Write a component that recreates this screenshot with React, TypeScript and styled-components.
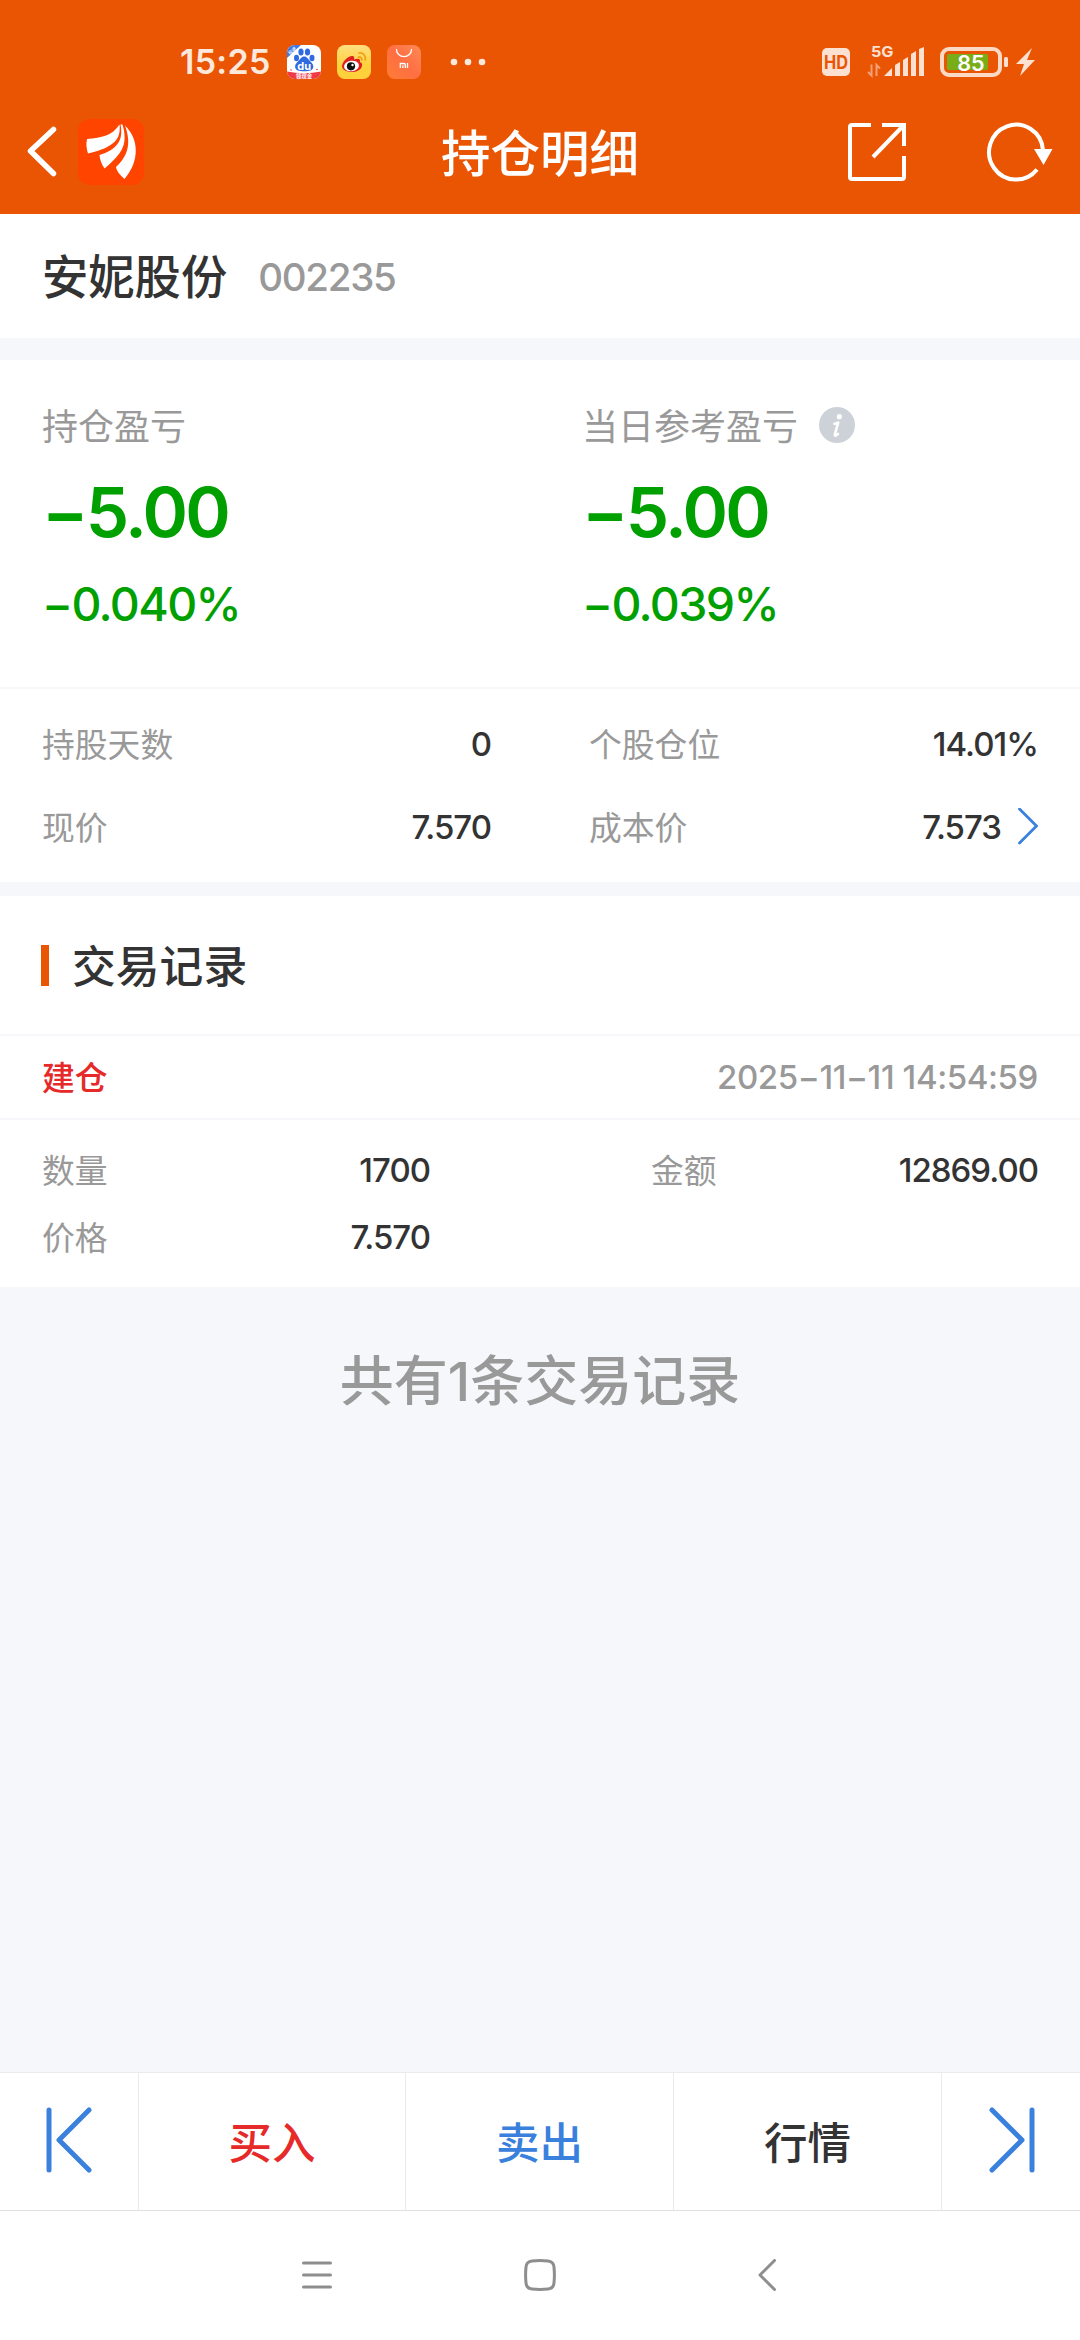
import React from "react";
import styled, { createGlobalStyle } from "styled-components";

const GlobalStyle = createGlobalStyle`
  * { box-sizing: border-box; }
  html, body { margin: 0; padding: 0; background: #f6f7fa; }
  body { font-family: Inter, "Noto Sans CJK SC", sans-serif; font-weight: 500; color: #333; }
`;

const GRAY = "#999";
const GREEN = "#00a000";
const RED = "#e62929";
const BLUE = "#3a80dd";

const Screen = styled.div`
  width: 1080px;
  height: 2340px;
  display: flex;
  flex-direction: column;
  background: #f6f7fa;
  overflow: hidden;
`;

const Header = styled.header`
  height: 214px;
  background: #ea5504;
  color: #fff;
  display: flex;
  flex-direction: column;
  flex: none;
`;

const StatusBar = styled.div`
  height: 90px;
  padding: 34px 43px 0 180px;
  display: flex;
  align-items: center;
  justify-content: space-between;
  svg { display: block; overflow: visible; }
`;

const StatusGroup = styled.div`
  display: flex;
  align-items: center;
`;

const Clock = styled.span`
  width: 107px;
  font-size: 34px;
  font-weight: 600;
  line-height: 36px;
  letter-spacing: 0.3px;
  color: #fde8dc;
`;

const AppIcons = styled.div`
  display: flex;
  gap: 16px;
  margin-right: 29px;
`;

const TitleBar = styled.div`
  height: 124px;
  display: grid;
  grid-template-columns: 1fr auto 1fr;
  align-items: center;
  padding: 0 26px;
`;

const TitleLeft = styled.div`
  display: flex;
  align-items: center;
  gap: 20px;
`;

const TitleRight = styled.div`
  display: flex;
  align-items: center;
  justify-content: flex-end;
  gap: 79px;
`;

const Title = styled.h1`
  margin: 0;
  padding-top: 3px;
  font-size: 49.5px;
  line-height: 60px;
  font-weight: 500;
`;

const StockBar = styled.section`
  height: 124px;
  flex: none;
  padding: 2px 42px 0;
  display: flex;
  align-items: center;
  gap: 31px;
  background: #fff;
`;

const StockName = styled.span`
  font-size: 46.3px;
  line-height: 60px;
`;

const StockCode = styled.span`
  font-size: 38.5px;
  line-height: 60px;
  letter-spacing: -1.3px;
  color: ${GRAY};
`;

const Profit = styled.section`
  margin-top: 22px;
  height: 327px;
  flex: none;
  display: grid;
  grid-template-columns: 540px 540px;
  background: #fff;
`;

const ProfitCell = styled.div`
  padding: 43px 42px 0;
  color: ${GREEN};
`;

const ProfitLabel = styled.div`
  display: flex;
  align-items: center;
  gap: 21px;
  height: 44px;
  font-size: 36px;
  line-height: 44px;
  font-weight: 400;
  color: ${GRAY};
`;

const ProfitCaption = styled.span`
  padding-top: 4px;
`;

const ProfitAmount = styled.div`
  margin-top: 23px;
  font-size: 69px;
  font-weight: 600;
  line-height: 84px;
  letter-spacing: -2.6px;
`;

const ProfitRate = styled.div`
  margin-top: 20px;
  font-size: 46.5px;
  line-height: 60px;
  letter-spacing: -1.6px;
`;

const Stats = styled.section`
  height: 195px;
  flex: none;
  padding: 13px 42px 0;
  border-top: 2px solid #f6f7fa;
  background: #fff;
  display: grid;
  grid-template-columns: 449px 449px;
  grid-template-rows: 83px 83px;
  column-gap: 98px;
`;

const Field = styled.div<{ $h?: number }>`
  display: flex;
  align-items: center;
  justify-content: space-between;
  height: ${(p) => p.$h ?? 83}px;
  font-size: 33px;
`;

const Label = styled.span`
  padding-bottom: 3px;
  font-size: 32.8px;
  font-weight: 400;
  color: ${GRAY};
`;

const Value = styled.span`
  display: flex;
  align-items: center;
  gap: 17px;
  letter-spacing: -1px;
`;

const SectionTitle = styled.h2`
  margin: 14px 0 0;
  height: 138px;
  flex: none;
  padding: 0 41px;
  display: flex;
  align-items: center;
  gap: 23px;
  background: #fff;
  font-size: 43.8px;
  font-weight: 500;

  &::before {
    content: "";
    width: 8px;
    height: 41px;
    background: #ea5504;
  }
`;

const SectionText = styled.span`
  padding-bottom: 3px;
`;

const RecordHead = styled.div`
  height: 84px;
  flex: none;
  padding: 0 42px;
  display: flex;
  align-items: center;
  justify-content: space-between;
  border-top: 2px solid #f6f7fa;
  background: #fff;
  font-size: 33px;
`;

const RecordType = styled.span`
  padding-bottom: 3px;
  font-size: 32.8px;
  color: ${RED};
`;

const RecordTime = styled.time`
  letter-spacing: -0.4px;
  color: ${GRAY};
`;

const RecordBody = styled.div`
  height: 169px;
  flex: none;
  padding: 16px 42px 0;
  border-top: 2px solid #f6f7fa;
  background: #fff;
  display: grid;
  grid-template-columns: 388px 387px;
  grid-template-rows: 67px 67px;
  justify-content: space-between;
`;

const Summary = styled.p`
  margin: 0;
  padding-top: 60px;
  flex: 1;
  text-align: center;
  font-size: 54px;
  line-height: 70px;
  color: ${GRAY};
`;

const ActionBar = styled.nav`
  height: 138px;
  flex: none;
  display: grid;
  grid-template-columns: 139px 267px 268px 268px 138px;
  border-top: 1px solid #ebebeb;
  background: #fff;
`;

const Action = styled.button<{ $color?: string }>`
  border: 0;
  border-right: 1px solid #ebebeb;
  padding: 0 0 3px;
  background: none;
  font: inherit;
  font-size: 43.5px;
  color: ${(p) => p.$color ?? "#333"};
  display: flex;
  align-items: center;
  justify-content: center;

  &:last-child { border-right: 0; padding-left: 2px; }
`;

const SystemNav = styled.div`
  height: 130px;
  flex: none;
  border-top: 1px solid #e0e0e0;
  background: #fff;
  display: grid;
  grid-template-columns: 222px 234px 18px;
  padding: 48px 0 0 302px;
`;

const BaiduIcon = () => (
  <svg width="34" height="34" viewBox="0 0 34 34">
    <defs>
      <clipPath id="bd"><rect width="34" height="34" rx="8" /></clipPath>
    </defs>
    <g clipPath="url(#bd)">
      <rect width="34" height="34" fill="#fff" />
      <path d="M0 0H14L0 13Z" fill="#4079e6" />
      <g fill="#2f6ae0">
        <ellipse cx="14" cy="7" rx="2.6" ry="3.5" />
        <ellipse cx="20.5" cy="7" rx="2.6" ry="3.5" />
        <ellipse cx="9.5" cy="13" rx="2.5" ry="3.2" />
        <ellipse cx="25" cy="13" rx="2.5" ry="3.2" />
        <path d="M17.2 11.5c3 0 3.700 2.500 5.800 4.500 2.500 2.300 3.700 4 3.200 6.500-.6 3-3.500 3.700-9 3.700s-8.400-.7-9-3.700c-.5-2.500.7-4.200 3.200-6.500 2.100-2 2.800-4.500 5.800-4.500z" />
      </g>
      <path d="M0 26.500Q17 30 34 26.500V34H0Z" fill="#ee3b46" />
      <circle cx="4" cy="25" r=".8" fill="#ee3b46" />
      <circle cx="30" cy="24.500" r=".8" fill="#ee3b46" />
    </g>
    <text x="3" y="10" fontSize="4.500" fill="#fff" transform="rotate(-42 3 10)">极速</text>
    <text x="17.2" y="24.500" fontSize="11" fontWeight="700" textAnchor="middle" fill="#fff">du</text>
    <text x="17" y="32.500" fontSize="5.500" fontWeight="700" textAnchor="middle" fill="#fff">领现金</text>
  </svg>
);

const WeiboIcon = () => (
  <svg width="34" height="34" viewBox="0 0 34 34">
    <defs>
      <linearGradient id="wb" x1="0" y1="0" x2="0" y2="1">
        <stop offset="0" stopColor="#ffdf80" />
        <stop offset=".6" stopColor="#ffd23c" />
      </linearGradient>
    </defs>
    <rect width="34" height="34" rx="8" fill="url(#wb)" />
    <path d="M5 21c0-4 6-10 10-10 2.500 0 2.500 2 2 3.500 2-1 5.500-1.500 6 .5.200 1-.3 2-.3 2 2 .6 2.800 2 2.300 4-1 4-5.500 6-10.500 6C9 27 5 24.500 5 21z" fill="#e0211f" />
    <ellipse cx="14.500" cy="21" rx="7.500" ry="5.300" fill="#fff" transform="rotate(-8 14.500 21)" />
    <circle cx="14" cy="21.300" r="4.100" fill="#111" />
    <circle cx="15.500" cy="20" r="1.200" fill="#fff" />
    <g fill="none" stroke="#f0a015" strokeWidth="1.700" strokeLinecap="round">
      <path d="M21.500 12c2-.4 3.600 1 3.300 3.200" />
      <path d="M22 8c4-.6 7 2.500 6.300 6.800" />
    </g>
  </svg>
);

const MiStoreIcon = () => (
  <svg width="34" height="34" viewBox="0 0 34 34">
    <defs>
      <linearGradient id="mi" x1="0" y1="1" x2="1" y2="0">
        <stop offset="0" stopColor="#ff7c35" />
        <stop offset=".5" stopColor="#ff6f43" />
        <stop offset="1" stopColor="#ff8a55" />
      </linearGradient>
    </defs>
    <rect width="34" height="34" rx="8" fill="url(#mi)" />
    <path d="M9.500 4.500a7.500 7.200 0 0 0 15 0" fill="none" stroke="#fff" strokeWidth="1.300" strokeLinecap="round" />
    <path d="M13.300 23v-4.500h3.700q1.300 0 1.300 1.300V23M15.800 20.300V23M20.500 18V23" fill="none" stroke="#fff" strokeWidth="1.300" />
  </svg>
);

const MoreDots = () => (
  <svg width="36" height="8" viewBox="0 0 36 8">
    <g fill="#fde8dc">
      <circle cx="4" cy="4" r="3.300" />
      <circle cx="18" cy="4" r="3.300" />
      <circle cx="32" cy="4" r="3.300" />
    </g>
  </svg>
);

const StatusIcons = () => (
  <svg width="216" height="44" viewBox="820 40 216 44">
    <g fill="#fce0d2">
      <rect x="821" y="48" width="28" height="28" rx="5" />
      <text x="835" y="69" fontSize="18.500" fontWeight="700" textAnchor="middle" fill="#ea5504" textLength="24" lengthAdjust="spacingAndGlyphs">HD</text>
      <text x="870" y="57" fontSize="15" fontWeight="700" textLength="22.500" lengthAdjust="spacingAndGlyphs">5G</text>
      <path d="M883 76l8-8v8z" />
      <path d="M894 76V65l5-3v14z" />
      <path d="M902 76V60l5-3v19z" />
      <path d="M910 76V54l5-3v25z" />
      <path d="M918 76V49l5-2v29z" />
      <rect x="1003" y="57" width="4" height="10" rx="1.500" />
      <path d="M1031 48l-16 16h8l-4 12 15-16h-8z" />
    </g>
    <path d="M867 72l3.500 3.500V64.500M879 68.500l-3.500-3.500V76" fill="none" stroke="#f5a077" strokeWidth="2" />
    <rect x="941" y="49" width="58" height="26" rx="7" fill="none" stroke="#fcd9c5" strokeWidth="4" />
    <rect x="946" y="54" width="41" height="16" rx="2" fill="#78ad18" />
    <text x="970" y="70.500" fontSize="21.500" fontWeight="600" textAnchor="middle" fill="#fff">85</text>
  </svg>
);

const BackIcon = () => (
  <svg width="32" height="54" viewBox="0 0 32 54">
    <path d="M27.500 4.500L4.500 26l23 22.500" fill="none" stroke="#fff" strokeWidth="5.500" strokeLinecap="round" strokeLinejoin="round" />
  </svg>
);

const BrandLogo = () => (
  <svg width="66" height="66" viewBox="0 0 66 66">
    <rect width="66" height="66" rx="12" fill="#ff4400" />
    <g fill="#fff">
      <path d="M41.500 5.500C43 19 38 28 10 34.500Q7.500 27 9 20C24 18.500 34 17 41.500 5.500Z" />
      <path d="M42.500 5.500H44.500C50 25 45 34 26.500 49.500Q22 43 21.500 36C38 31 46 22 42.500 5.500Z" />
      <path d="M47 6.500C61 20 62 42 46.500 60Q38.500 53 38 48C51 36 53 23 47 6.500Z" />
    </g>
  </svg>
);

const ShareIcon = () => (
  <svg width="60" height="60" viewBox="0 0 60 60">
    <g fill="none" stroke="#fff" strokeWidth="4">
      <path d="M24 3H5Q3 3 3 5V55Q3 57 5 57H55Q57 57 57 55V34" />
      <path d="M35 3H57V24M56 4L26 35" />
    </g>
  </svg>
);

const RefreshIcon = () => (
  <svg width="68" height="60" viewBox="0 0 68 60">
    <path d="M51 47.500A27 27.500 0 1 1 57 28" fill="none" stroke="#fff" strokeWidth="4" />
    <path d="M48 27h18.500L57.500 43z" fill="#fff" />
  </svg>
);

const InfoIcon = () => (
  <svg width="36" height="36" viewBox="0 0 36 36">
    <circle cx="18" cy="18" r="18" fill="#cdd1d8" />
    <circle cx="20.300" cy="9.700" r="2.600" fill="#fff" />
    <path d="M15.500 16.800L19.200 15.700 15.800 27.500Q15.600 30 19 27" fill="none" stroke="#fff" strokeWidth="2.600" strokeLinejoin="round" strokeLinecap="round" />
  </svg>
);

const MoreChevron = () => (
  <svg width="20" height="38" viewBox="0 0 20 38">
    <path d="M1.500 1L18.500 18 1.500 35" fill="none" stroke={BLUE} strokeWidth="2.800" strokeLinecap="round" />
  </svg>
);

const SkipIcon = ({ flip }: { flip?: boolean }) => (
  <svg width="46" height="66" viewBox="0 0 46 66">
    <path
      d={flip ? "M43 3V63M3 3L33 33 3 63" : "M3 3V63M43 3L13 33 43 63"}
      fill="none"
      stroke={BLUE}
      strokeWidth="5"
      strokeLinecap="round"
      strokeLinejoin="round"
    />
  </svg>
);

const NavStroke = styled.svg`
  fill: none;
  stroke: #8e8e8e;
  stroke-width: 3;
  stroke-linecap: round;
  stroke-linejoin: round;
`;

export default function App() {
  return (
    <>
      <GlobalStyle />
      <Screen>
        <Header>
          <StatusBar>
            <StatusGroup>
              <Clock>15:25</Clock>
              <AppIcons>
                <BaiduIcon />
                <WeiboIcon />
                <MiStoreIcon />
              </AppIcons>
              <MoreDots />
            </StatusGroup>
            <StatusIcons />
          </StatusBar>
          <TitleBar>
            <TitleLeft>
              <BackIcon />
              <BrandLogo />
            </TitleLeft>
            <Title>持仓明细</Title>
            <TitleRight>
              <ShareIcon />
              <RefreshIcon />
            </TitleRight>
          </TitleBar>
        </Header>

        <StockBar>
          <StockName>安妮股份</StockName>
          <StockCode>002235</StockCode>
        </StockBar>

        <Profit>
          <ProfitCell>
            <ProfitLabel><ProfitCaption>持仓盈亏</ProfitCaption></ProfitLabel>
            <ProfitAmount>−5.00</ProfitAmount>
            <ProfitRate>−0.040%</ProfitRate>
          </ProfitCell>
          <ProfitCell>
            <ProfitLabel><ProfitCaption>当日参考盈亏</ProfitCaption><InfoIcon /></ProfitLabel>
            <ProfitAmount>−5.00</ProfitAmount>
            <ProfitRate>−0.039%</ProfitRate>
          </ProfitCell>
        </Profit>

        <Stats>
          <Field><Label>持股天数</Label><Value>0</Value></Field>
          <Field><Label>个股仓位</Label><Value>14.01%</Value></Field>
          <Field><Label>现价</Label><Value>7.570</Value></Field>
          <Field><Label>成本价</Label><Value>7.573<MoreChevron /></Value></Field>
        </Stats>

        <SectionTitle><SectionText>交易记录</SectionText></SectionTitle>
        <RecordHead>
          <RecordType>建仓</RecordType>
          <RecordTime>2025−11−11 14:54:59</RecordTime>
        </RecordHead>
        <RecordBody>
          <Field $h={67}><Label>数量</Label><Value>1700</Value></Field>
          <Field $h={67}><Label>金额</Label><Value>12869.00</Value></Field>
          <Field $h={67}><Label>价格</Label><Value>7.570</Value></Field>
        </RecordBody>

        <Summary>共有1条交易记录</Summary>

        <ActionBar>
          <Action><SkipIcon /></Action>
          <Action $color={RED}>买入</Action>
          <Action $color={BLUE}>卖出</Action>
          <Action>行情</Action>
          <Action><SkipIcon flip /></Action>
        </ActionBar>

        <SystemNav>
          <NavStroke width="30" height="32" viewBox="0 0 30 32"><path d="M1.500 4H28.500M1.500 16H28.500M1.500 28H28.500" /></NavStroke>
          <NavStroke width="32" height="32" viewBox="0 0 32 32"><path d="M8 2Q16 1.200 24 2Q29.500 2.500 30 8Q30.800 16 30 24Q29.500 29.500 24 30Q16 30.800 8 30Q2.500 29.500 2 24Q1.200 16 2 8Q2.500 2.500 8 2Z" /></NavStroke>
          <NavStroke width="18" height="32" viewBox="0 0 18 32"><path d="M16.500 1.500L2 16l14.500 14.500" /></NavStroke>
        </SystemNav>
      </Screen>
    </>
  );
}
